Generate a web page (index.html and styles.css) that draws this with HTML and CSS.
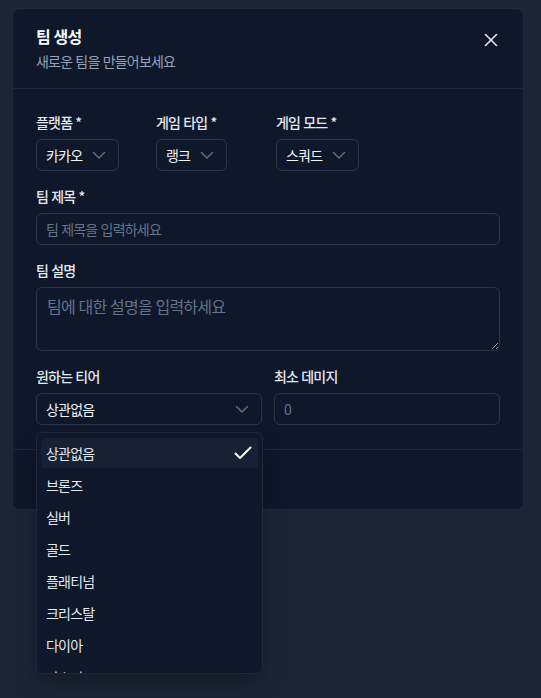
FILE: index.html
```html
<!DOCTYPE html>
<html lang="ko">
<head>
<meta charset="utf-8">
<link rel="stylesheet" href="styles.css">
</head>
<body>
<div class="modal">
  <div class="header">
    <div class="titles">
      <h2 class="title">팀 생성</h2>
      <p class="subtitle">새로운 팀을 만들어보세요</p>
    </div>
    <button class="close" aria-label="닫기">
      <svg width="16" height="16" viewBox="0 0 16 16" fill="none" stroke="currentColor" stroke-width="1.6" stroke-linecap="round"><path d="M2.5 2.5 13.5 13.5"/><path d="M13.5 2.5 2.5 13.5"/></svg>
    </button>
  </div>
  <div class="body">
    <div class="row3">
      <div class="field">
        <label class="label">플랫폼 *</label>
        <button class="select small">카카오<svg class="chev" width="16" height="16" viewBox="0 0 16 16" fill="none" stroke="currentColor" stroke-width="1.5" stroke-linecap="round" stroke-linejoin="round"><path d="M2.5 5.5 8 11l5.5-5.5"/></svg></button>
      </div>
      <div class="field">
        <label class="label">게임 타입 *</label>
        <button class="select small">랭크<svg class="chev" width="16" height="16" viewBox="0 0 16 16" fill="none" stroke="currentColor" stroke-width="1.5" stroke-linecap="round" stroke-linejoin="round"><path d="M2.5 5.5 8 11l5.5-5.5"/></svg></button>
      </div>
      <div class="field">
        <label class="label">게임 모드 *</label>
        <button class="select small">스쿼드<svg class="chev" width="16" height="16" viewBox="0 0 16 16" fill="none" stroke="currentColor" stroke-width="1.5" stroke-linecap="round" stroke-linejoin="round"><path d="M2.5 5.5 8 11l5.5-5.5"/></svg></button>
      </div>
    </div>
    <div class="field">
      <label class="label">팀 제목 *</label>
      <input class="input" placeholder="팀 제목을 입력하세요">
    </div>
    <div class="field">
      <label class="label">팀 설명</label>
      <textarea class="textarea" placeholder="팀에 대한 설명을 입력하세요"></textarea>
    </div>
    <div class="row2">
      <div class="field tier">
        <label class="label">원하는 티어</label>
        <button class="select wide">상관없음<svg class="chev" width="16" height="16" viewBox="0 0 16 16" fill="none" stroke="currentColor" stroke-width="1.5" stroke-linecap="round" stroke-linejoin="round"><path d="M2.5 5.5 8 11l5.5-5.5"/></svg></button>
        <div class="menu">
          <div class="item active">상관없음<svg class="check" width="18" height="14" viewBox="0 0 18 14" fill="none" stroke="currentColor" stroke-width="2" stroke-linecap="round" stroke-linejoin="round"><path d="M1.5 7.5 6 12 16.5 1.5"/></svg></div>
          <div class="item">브론즈</div>
          <div class="item">실버</div>
          <div class="item">골드</div>
          <div class="item">플래티넘</div>
          <div class="item">크리스탈</div>
          <div class="item">다이아</div>
          <div class="item">마스터</div>
        </div>
      </div>
      <div class="field">
        <label class="label">최소 데미지</label>
        <input class="input" placeholder="0">
      </div>
    </div>
  </div>
  <div class="footer"></div>
</div>
</body>
</html>
```
FILE: styles.css
```css
* { box-sizing: border-box; }
html, body { margin: 0; }
body {
  background: #1b2536;
  font-family: "Noto Sans CJK KR", "Noto Sans", sans-serif;
  letter-spacing: -0.05em;
  color: #e2e8f0;
  padding: 8px 17px 0 12px;
  height: 698px;
}
.modal {
  width: 512px;
  background: #0f172a;
  border: 1px solid #1e293b;
  border-radius: 8px;
}
.header {
  display: flex;
  justify-content: space-between;
  align-items: flex-start;
  padding: 15px 24px 17px 23px;
  border-bottom: 1px solid #1e293b;
}
.title {
  margin: 0;
  font-size: 16px;
  line-height: 24px;
  font-weight: 700;
  color: #f8fafc;
}
.subtitle {
  margin: 3px 0 0;
  font-size: 14px;
  line-height: 20px;
  color: #94a3b8;
}
.close {
  background: none;
  border: 0;
  padding: 0;
  margin-top: 8px;
  color: #e2e8f0;
  display: flex;
}
.body {
  padding: 23px 23px 24px 23px;
  display: flex;
  flex-direction: column;
  gap: 15px;
}
.row3 {
  display: grid;
  grid-template-columns: 120px 120px 120px;
}
.row2 {
  display: grid;
  grid-template-columns: 1fr 1fr;
  gap: 12px;
}
.field {
  display: flex;
  flex-direction: column;
  align-items: flex-start;
}
.label {
  font-size: 14px;
  line-height: 20px;
  font-weight: 500;
  color: #e2e8f0;
  margin-bottom: 7px;
}
.select {
  height: 32px;
  display: flex;
  align-items: center;
  justify-content: space-between;
  background: transparent;
  border: 1px solid #2b3648;
  border-radius: 6px;
  color: #f1f5f9;
  font-family: inherit;
  letter-spacing: inherit;
  font-size: 14px;
  padding: 0 11px 0 9px;
}
.select.small { gap: 9px; }
.select.wide { width: 100%; }
.chev { color: #5f6d82; }
.input, .textarea {
  width: 100%;
  background: transparent;
  border: 1px solid #2b3648;
  border-radius: 6px;
  color: #f1f5f9;
  font-family: inherit;
  letter-spacing: inherit;
  font-size: 14px;
  outline: none;
}
.input {
  height: 32px;
  padding: 0 9px;
}
.textarea {
  height: 64px;
  padding: 7px 10px;
  font-size: 16px;
  line-height: 22px;
  resize: vertical;
  display: block;
}
.input::placeholder, .textarea::placeholder { color: #64748b; }
.tier { position: relative; }
.menu {
  position: absolute;
  top: calc(100% + 7px);
  left: 0;
  width: 227px;
  height: 242px;
  background: #0f172a;
  border: 1px solid #1e293b;
  border-radius: 6px;
  padding: 5px 4px;
  overflow: hidden;
  box-shadow: 0 10px 20px rgba(0, 0, 0, 0.25);
  z-index: 5;
  display: flex;
  flex-direction: column;
  gap: 2px;
}
.item {
  flex: none;
  height: 30px;
  display: flex;
  align-items: center;
  justify-content: space-between;
  padding: 0 6px 0 5px;
  border-radius: 4px;
  font-size: 14px;
  color: #e2e8f0;
}
.item.active { background: #172135; }
.check { color: #f8fafc; }
.footer {
  height: 60px;
  border-top: 1px solid #1e293b;
}
```
